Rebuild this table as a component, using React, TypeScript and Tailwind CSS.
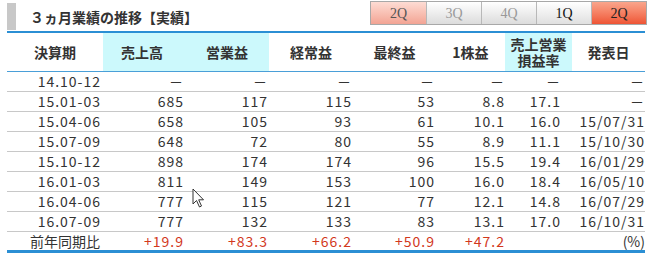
import React from "react";

const font = { fontFamily: '"Noto Sans CJK JP", "Noto Sans", sans-serif' };

const rows = [
    ["14.10-12", "－", "－", "－", "－", "－", "－", "－"],
    ["15.01-03", "685", "117", "115", "53", "8.8", "17.1", "－"],
    ["15.04-06", "658", "105", "93", "61", "10.1", "16.0", "15/07/31"],
    ["15.07-09", "648", "72", "80", "55", "8.9", "11.1", "15/10/30"],
    ["15.10-12", "898", "174", "174", "96", "15.5", "19.4", "16/01/29"],
    ["16.01-03", "811", "149", "153", "100", "16.0", "18.4", "16/05/10"],
    ["16.04-06", "777", "115", "121", "77", "12.1", "14.8", "16/07/29"],
    ["16.07-09", "777", "132", "133", "83", "13.1", "17.0", "16/10/31"],
];

const cols = "grid grid-cols-[96px_82px_84px_84px_83px_69px_67px_73px]";
const pads = ["pr-[2px]", "pr-[1px]", "pr-[1px]", "pr-[1px]", "pr-[1px]", "pr-0", "pr-[11px]", "pr-0"];

const Tab = ({ label, kind }: { label: string; kind: "pink" | "gray" | "white" | "red" }) => {
    const styles = {
        pink: "bg-gradient-to-b from-[#fddcd4] to-[#f2a494] text-[#555]",
        gray: "bg-gradient-to-b from-[#ffffff] to-[#dcdcdc] text-[#999]",
        white: "bg-gradient-to-b from-[#ffffff] to-[#e0e0e0] text-[#111]",
        red: "bg-gradient-to-b from-[#f9a58c] to-[#ee5434] text-[#222]",
    }[kind];
    return (
        <div className={`w-[55px] h-full flex items-center justify-center border-l border-[#b8b8b8] first:border-l-0 text-[14px] ${styles}`} style={{ fontFamily: '"Liberation Serif", serif' }}>
            {label}
        </div>
    );
};

const Cursor = () => (
    <svg className="absolute left-[192px] top-[188px]" width="14" height="20" viewBox="0 0 14 20">
        <path d="M1 1 L1 16 L4.5 12.5 L7.5 19 L9.5 18 L6.7 11.8 L11.5 11.8 Z" fill="#fff" stroke="#333" strokeWidth="1" strokeLinejoin="round" />
    </svg>
);

export default function App() {
    return (
        <div className="relative w-[652px] h-[258px] bg-white text-[#333]" style={font}>
            {/* title */}
            <div className="flex h-[31px] pl-[7px]">
                <div className="w-[9px] h-[27px] mt-[3px] bg-[#c8c8c8]" />
                <h2 className="ml-[14px] mt-[3px] text-[14px] font-bold leading-[28px] text-[#333]">３ヵ月業績の推移【実績】</h2>
                <div className="ml-auto mr-[5px] mt-[1px] h-[24px] flex border border-[#a8a8a8]">
                    <Tab label="2Q" kind="pink" />
                    <Tab label="3Q" kind="gray" />
                    <Tab label="4Q" kind="gray" />
                    <Tab label="1Q" kind="white" />
                    <Tab label="2Q" kind="red" />
                </div>
            </div>

            <div className="ml-[7px] w-[638px] border-t-2 border-[#2b8fd4]">
                {/* header */}
                <div className={`${cols} h-[39px] border-b border-[#4a9fd8] text-[14px] font-bold`}>
                    <div className="flex items-center justify-center">決算期</div>
                    <div className="flex items-center justify-center bg-[#ccf9fc] pr-[4px]">売上高</div>
                    <div className="flex items-center justify-center bg-[#ccf9fc]">営業益</div>
                    <div className="flex items-center justify-center">経常益</div>
                    <div className="flex items-center justify-center">最終益</div>
                    <div className="flex items-center justify-center">1株益</div>
                    <div className="flex flex-col items-center justify-center bg-[#ccf9fc] leading-[16px]">
                        <span>売上営業</span>
                        <span>損益率</span>
                    </div>
                    <div className="flex items-center justify-center">発表日</div>
                </div>

                {/* rows */}
                {rows.map((r) => (
                    <div key={r[0]} className={`${cols} h-[20px] border-b border-[#c8c8c8] text-[14px] leading-[19px] tracking-[1px]`}>
                        {r.map((c, i) => (
                            <div key={i} className={`text-right ${pads[i]}`}>{c}</div>
                        ))}
                    </div>
                ))}

                <div className={`${cols} h-[21px] border-b-[3px] border-[#2b8fd4] text-[14px] leading-[18px]`}>
                    <div className="text-right pr-[3px]">前年同期比</div>
                    <div className="text-right pr-[1px] tracking-[1px] text-[#d2381c]">+19.9</div>
                    <div className="text-right pr-[1px] tracking-[1px] text-[#d2381c]">+83.3</div>
                    <div className="text-right pr-[1px] tracking-[1px] text-[#d2381c]">+66.2</div>
                    <div className="text-right pr-[1px] tracking-[1px] text-[#d2381c]">+50.9</div>
                    <div className="text-right pr-0 tracking-[1px] text-[#d2381c]">+47.2</div>
                    <div />
                    <div className="text-right">(%)</div>
                </div>
            </div>
            <Cursor />
        </div>
    );
}
